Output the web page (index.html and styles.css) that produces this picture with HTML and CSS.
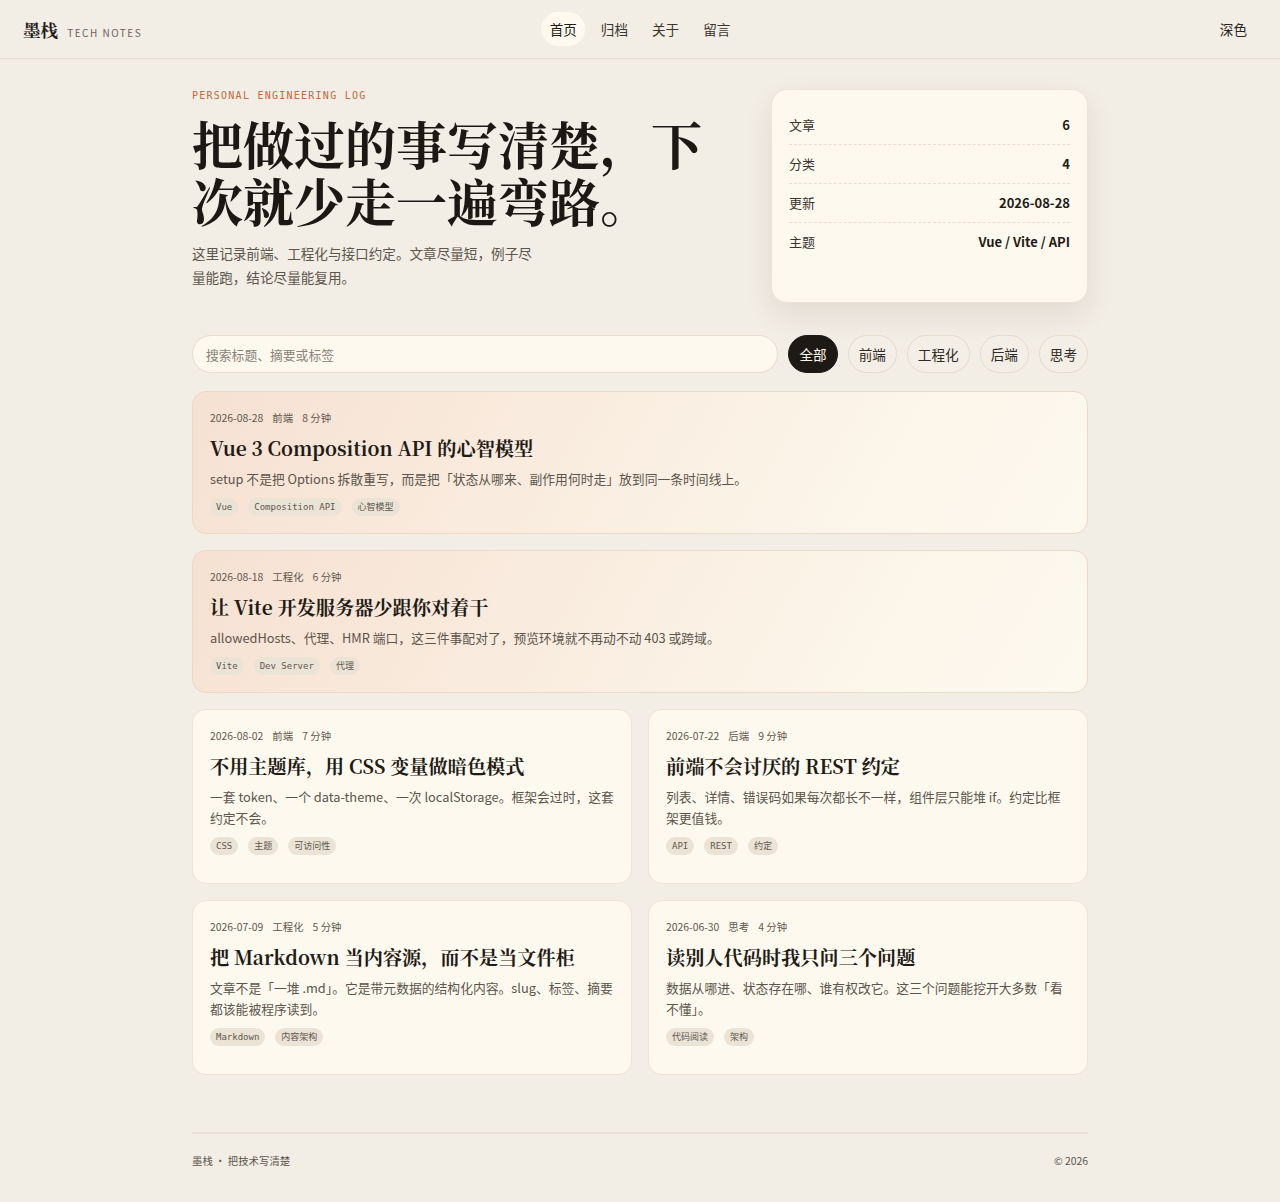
FILE: index.html
```html
<!DOCTYPE html>
<html lang="zh-CN">
<head>
<meta charset="utf-8">
<title>墨栈 Tech Notes</title>
<link rel="stylesheet" href="styles.css">
</head>
<body>
<header class="topbar">
  <div class="brand"><span class="brand-name">墨栈</span><span class="brand-sub">TECH NOTES</span></div>
  <nav class="nav">
    <a class="nav-item active">首页</a>
    <a class="nav-item">归档</a>
    <a class="nav-item">关于</a>
    <a class="nav-item">留言</a>
  </nav>
  <button class="theme-btn">深色</button>
</header>

<main class="main">
  <section class="hero">
    <div class="hero-text">
      <div class="eyebrow">PERSONAL ENGINEERING LOG</div>
      <h1 class="hero-title">把做过的事写清楚，下次就少走一遍弯路。</h1>
      <p class="hero-desc">这里记录前端、工程化与接口约定。文章尽量短，例子尽量能跑，结论尽量能复用。</p>
    </div>
    <div class="stats">
      <div class="stat-row"><span>文章</span><strong>6</strong></div>
      <div class="stat-row"><span>分类</span><strong>4</strong></div>
      <div class="stat-row"><span>更新</span><strong>2026-08-28</strong></div>
      <div class="stat-row"><span>主题</span><strong>Vue / Vite / API</strong></div>
    </div>
  </section>

  <section class="toolbar">
    <input class="search" type="text" placeholder="搜索标题、摘要或标签">
    <div class="filters">
      <button class="chip active">全部</button>
      <button class="chip">前端</button>
      <button class="chip">工程化</button>
      <button class="chip">后端</button>
      <button class="chip">思考</button>
    </div>
  </section>

  <section class="posts">
    <article class="post featured">
      <div class="meta"><span>2026-08-28</span><span>前端</span><span>8 分钟</span></div>
      <h2 class="post-title">Vue 3 Composition API 的心智模型</h2>
      <p class="summary">setup 不是把 Options 拆散重写，而是把「状态从哪来、副作用何时走」放到同一条时间线上。</p>
      <div class="tags"><span class="tag">Vue</span><span class="tag">Composition API</span><span class="tag">心智模型</span></div>
    </article>
    <article class="post featured">
      <div class="meta"><span>2026-08-18</span><span>工程化</span><span>6 分钟</span></div>
      <h2 class="post-title">让 Vite 开发服务器少跟你对着干</h2>
      <p class="summary">allowedHosts、代理、HMR 端口，这三件事配对了，预览环境就不再动不动 403 或跨域。</p>
      <div class="tags"><span class="tag">Vite</span><span class="tag">Dev Server</span><span class="tag">代理</span></div>
    </article>
    <div class="post-grid">
      <article class="post">
        <div class="meta"><span>2026-08-02</span><span>前端</span><span>7 分钟</span></div>
        <h2 class="post-title">不用主题库，用 CSS 变量做暗色模式</h2>
        <p class="summary">一套 token、一个 data-theme、一次 localStorage。框架会过时，这套约定不会。</p>
        <div class="tags"><span class="tag">CSS</span><span class="tag">主题</span><span class="tag">可访问性</span></div>
      </article>
      <article class="post">
        <div class="meta"><span>2026-07-22</span><span>后端</span><span>9 分钟</span></div>
        <h2 class="post-title">前端不会讨厌的 REST 约定</h2>
        <p class="summary">列表、详情、错误码如果每次都长不一样，组件层只能堆 if。约定比框架更值钱。</p>
        <div class="tags"><span class="tag">API</span><span class="tag">REST</span><span class="tag">约定</span></div>
      </article>
      <article class="post">
        <div class="meta"><span>2026-07-09</span><span>工程化</span><span>5 分钟</span></div>
        <h2 class="post-title">把 Markdown 当内容源，而不是当文件柜</h2>
        <p class="summary">文章不是「一堆 .md」。它是带元数据的结构化内容。slug、标签、摘要都该能被程序读到。</p>
        <div class="tags"><span class="tag">Markdown</span><span class="tag">内容架构</span></div>
      </article>
      <article class="post">
        <div class="meta"><span>2026-06-30</span><span>思考</span><span>4 分钟</span></div>
        <h2 class="post-title">读别人代码时我只问三个问题</h2>
        <p class="summary">数据从哪进、状态存在哪、谁有权改它。这三个问题能挖开大多数「看不懂」。</p>
        <div class="tags"><span class="tag">代码阅读</span><span class="tag">架构</span></div>
      </article>
    </div>
  </section>

  <footer class="footer">
    <span>墨栈 · 把技术写清楚</span>
    <span>© 2026</span>
  </footer>
</main>
</body>
</html>
```

FILE: styles.css
```css
* { box-sizing: border-box; }

html, body {
  margin: 0;
  padding: 0;
}

body {
  background: #f2ede5;
  color: #1f1b16;
  font-family: "Noto Sans CJK SC", "Noto Sans", sans-serif;
  font-size: 14px;
}

.topbar {
  height: 59px;
  display: flex;
  align-items: center;
  justify-content: space-between;
  padding: 0 23px;
  border-bottom: 1px solid #e2dbcf;
  position: relative;
}

.brand {
  display: flex;
  align-items: baseline;
  gap: 9px;
}

.brand-name {
  font-family: "Noto Serif CJK SC", "Source Han Serif SC", "Liberation Serif", serif;
  font-weight: 700;
  font-size: 17.6px;
  color: #1f1b16;
}

.brand-sub {
  font-size: 10px;
  letter-spacing: 0.15em;
  color: #6b6459;
}

.nav {
  position: absolute;
  left: 50%;
  top: 12px;
  transform: translateX(-50%);
  display: flex;
  gap: 7px;
}

.nav-item {
  display: block;
  padding: 7px 8.5px;
  line-height: 20px;
  font-size: 13.6px;
  color: #3a352e;
  border-radius: 999px;
  cursor: pointer;
}

.nav-item.active {
  background: #fdf9ef;
  color: #1f1b16;
}

.theme-btn {
  border: none;
  background: transparent;
  font-family: inherit;
  font-size: 13.6px;
  color: #2a2520;
  padding: 6px 10px;
  cursor: pointer;
}

.main {
  max-width: 896px;
  margin: 0 auto;
  padding: 30px 0 34px;
}

.hero {
  display: grid;
  grid-template-columns: 1fr 317px;
  gap: 48px;
}

.hero-text {
  padding-bottom: 14px;
}

.eyebrow {
  font-family: "DejaVu Sans Mono", "Liberation Mono", monospace;
  font-size: 10px;
  line-height: 14px;
  letter-spacing: 0.125em;
  color: #c46a3c;
}

.hero-title {
  margin: 12px 0 0;
  font-family: "Noto Serif CJK SC", "Source Han Serif SC", "Liberation Serif", serif;
  font-weight: 700;
  font-size: 51px;
  line-height: 57px;
  letter-spacing: 0;
  color: #1c1915;
}

.hero-desc {
  margin: 12px 0 0;
  max-width: 346px;
  font-size: 13.6px;
  line-height: 24px;
  color: #5b554b;
}

.stats {
  background: #fdf9ef;
  border-radius: 16px;
  border: 1px solid #ece5d8;
  box-shadow: 0 12px 30px rgba(70, 50, 25, 0.09);
  padding: 16px 17px;
}

.stat-row {
  display: flex;
  justify-content: space-between;
  align-items: center;
  padding: 9px 0 9px;
  line-height: 20px;
  font-size: 13px;
  border-bottom: 1px dashed #e5ded1;
}

.stat-row:last-child {
  border-bottom: none;
}

.stat-row span {
  color: #3a352e;
}

.stat-row strong {
  font-weight: 700;
  color: #1f1b16;
}

.toolbar {
  display: flex;
  gap: 10px;
  margin-top: 32px;
}

.search {
  flex: 1;
  height: 38px;
  border: 1px solid #e5ded1;
  background: #fdf9ef;
  border-radius: 999px;
  padding: 0 13px;
  font-family: inherit;
  font-size: 12.8px;
  color: #1f1b16;
  outline: none;
}

.search::placeholder {
  color: #8a8277;
}

.filters {
  display: flex;
  gap: 10px;
}

.chip {
  height: 38px;
  padding: 0 10px;
  border: 1px solid #e3dccf;
  background: #f4efe6;
  border-radius: 999px;
  font-family: inherit;
  font-size: 13.6px;
  color: #2e2a24;
  cursor: pointer;
}

.chip.active {
  background: #1d1a16;
  border-color: #1d1a16;
  color: #fdf9ef;
}

.posts {
  margin-top: 18px;
  display: flex;
  flex-direction: column;
  gap: 16px;
}

.post {
  background: #fdf9ef;
  border: 1px solid #ebe3d6;
  border-radius: 14px;
  padding: 17px 17px 28px;
}

.post.featured {
  background: linear-gradient(120deg, #f6e1d2 0%, #f9ecdf 40%, #fcf5ea 75%, #fdf9ef 100%);
  border-color: #eed8c7;
  padding-bottom: 17px;
}

.post-grid {
  display: grid;
  grid-template-columns: 1fr 1fr;
  gap: 16px;
}

.meta {
  display: flex;
  gap: 9px;
  font-size: 10.4px;
  line-height: 18px;
  color: #5e574d;
}

.post-title {
  margin: 7px 0 0;
  font-family: "Noto Serif CJK SC", "Source Han Serif SC", "Liberation Serif", serif;
  font-weight: 700;
  font-size: 19.2px;
  line-height: 28px;
  color: #1f1b16;
}

.summary {
  margin: 6px 0 0;
  font-size: 12.8px;
  line-height: 21px;
  color: #5b554b;
}

.tags {
  display: flex;
  gap: 10px;
  margin-top: 9px;
}

.tag {
  display: inline-block;
  padding: 0 6px;
  height: 18px;
  line-height: 18px;
  border-radius: 999px;
  background: #ebe3d6;
  font-family: "DejaVu Sans Mono", "Liberation Mono", "Noto Sans CJK SC", monospace;
  font-size: 9px;
  color: #5e574d;
}

.footer {
  margin-top: 57px;
  border-top: 2px solid #e6e0d4;
  padding-top: 18px;
  display: flex;
  justify-content: space-between;
  font-size: 10.4px;
  line-height: 18px;
  color: #5b554b;
}
```
